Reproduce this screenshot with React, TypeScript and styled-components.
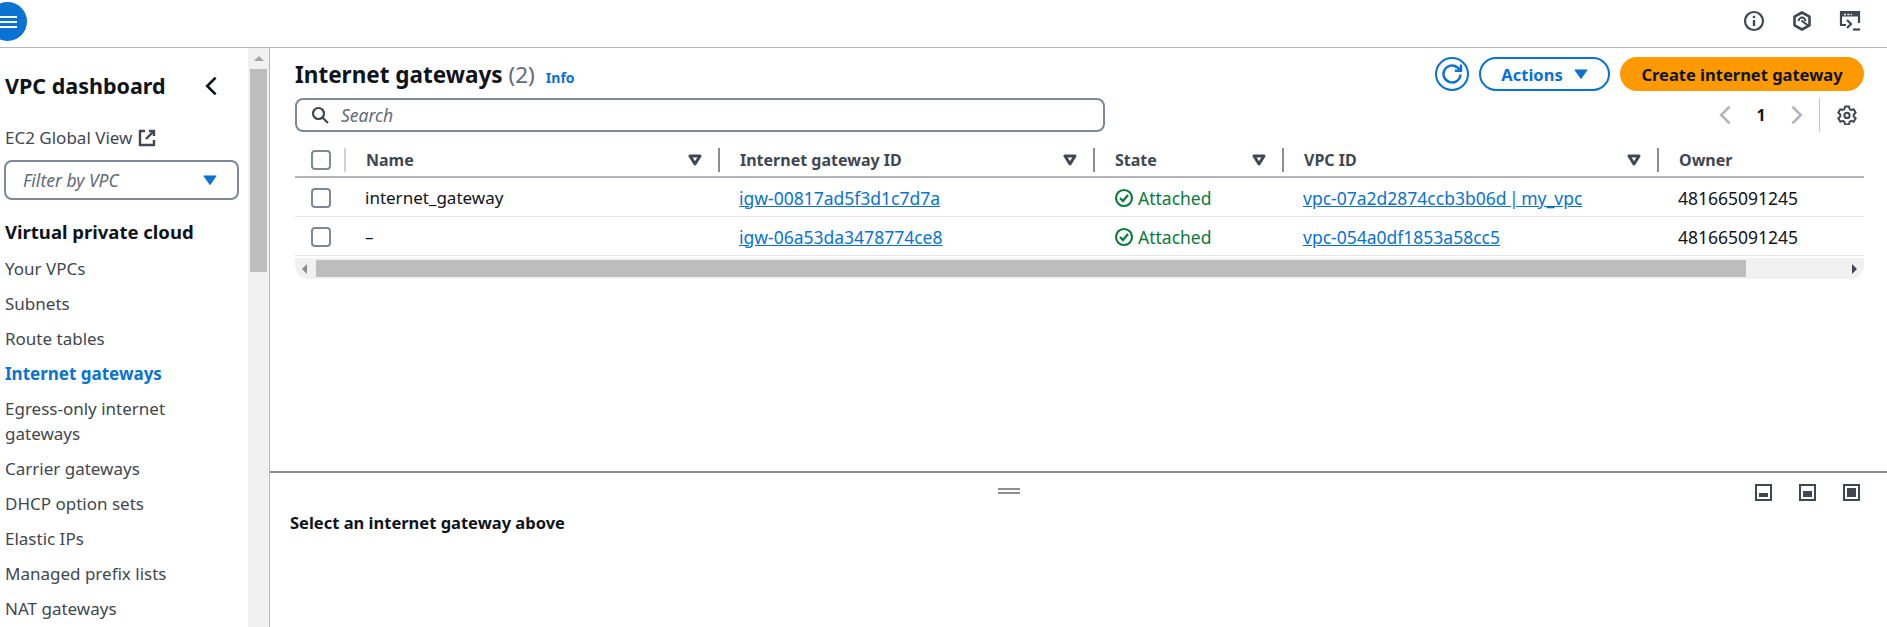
import React from "react";
import styled, { createGlobalStyle } from "styled-components";

const GlobalStyle = createGlobalStyle`
  html, body {
    margin: 0;
    height: 627px;
    overflow: hidden;
    background: #fff;
    font-family: "Noto Sans", "Open Sans", sans-serif;
    color: #16191f;
  }
  * { box-sizing: border-box; }
`;

const Page = styled.div`
  width: 1887px;
  height: 627px;
  display: flex;
  flex-direction: column;
  overflow: hidden;
`;

const TopBar = styled.header`
  height: 48px;
  flex: none;
  display: flex;
  align-items: flex-start;
  justify-content: space-between;
  border-bottom: 1px solid #b6b6bb;
`;

const MenuButton = styled.div`
  width: 39px;
  height: 39px;
  margin: 2px 0 0 -12px;
  border-radius: 50%;
  background: #0972d3;
  display: flex;
  align-items: center;
  justify-content: center;
`;

const TopIcons = styled.div`
  display: flex;
  gap: 26px;
  padding: 10px 26px 0 0;
  color: #414750;
`;

const Body = styled.div`
  flex: 1;
  display: flex;
  min-height: 0;
`;

const Sidebar = styled.aside`
  width: 270px;
  flex: none;
  display: flex;
  border-right: 1px solid #b6b6bb;
`;

const SideContent = styled.nav`
  width: 248px;
  flex: none;
  padding: 0 9px 0 4px;
`;

const SideHeader = styled.div`
  height: 75px;
  display: flex;
  align-items: center;
  justify-content: space-between;
  padding: 0 15px 0 1px;
  color: #0f141a;
`;

const SideTitle = styled.h2`
  margin: 0;
  font-size: 21.5px;
  font-weight: 700;
  line-height: 26px;
`;

const GlobalLink = styled.div`
  height: 25px;
  margin-top: 2px;
  padding-left: 1px;
  display: flex;
  align-items: center;
  gap: 6px;
  font-size: 17px;
  color: #414750;
`;

const FilterBox = styled.div`
  height: 40px;
  margin-top: 10px;
  padding: 0 20px 0 17px;
  display: flex;
  align-items: center;
  justify-content: space-between;
  border: 2px solid #7d8998;
  border-radius: 8px;
  font-size: 17.5px;
  font-style: italic;
  color: #5f6b7a;
`;

const SideGroup = styled.h3`
  margin: 20px 0 7px 1px;
  font-size: 18.5px;
  font-weight: 700;
  line-height: 24px;
  color: #0f141a;
`;

const NavItem = styled.div<{ $active?: boolean }>`
  padding: 5px 30px 5px 1px;
  font-size: 17px;
  line-height: 25px;
  font-weight: ${(p) => (p.$active ? 700 : 400)};
  color: ${(p) => (p.$active ? "#0972d3" : "#414750")};
`;

const VScroll = styled.div`
  flex: 1;
  background: #f1f1f1;
  display: flex;
  flex-direction: column;
  align-items: center;
`;

const ArrowUp = styled.div`
  width: 0;
  height: 0;
  margin-top: 8px;
  border-left: 5px solid transparent;
  border-right: 5px solid transparent;
  border-bottom: 5px solid #a3a3a3;
`;

const VThumb = styled.div`
  width: 17px;
  height: 203px;
  margin-top: 8px;
  background: #bdbdbd;
`;

const Main = styled.main`
  flex: 1;
  min-width: 0;
  display: flex;
  flex-direction: column;
`;

const ListPane = styled.section`
  height: 425px;
  flex: none;
  padding: 10px 23px 0 25px;
  border-bottom: 2px solid #8c8c94;
`;

const HeaderRow = styled.div`
  display: flex;
  align-items: center;
  justify-content: space-between;
  height: 34px;
`;

const TitleWrap = styled.div`
  display: flex;
  align-items: baseline;
  gap: 11px;
`;

const Title = styled.h1`
  margin: 0;
  font-size: 22.5px;
  font-weight: 700;
  line-height: 34px;
  color: #0f141a;
`;

const Count = styled.span`
  font-weight: 400;
  color: #5f6b7a;
`;

const InfoLink = styled.span`
  font-size: 14px;
  font-weight: 700;
  color: #0972d3;
`;

const Actions = styled.div`
  display: flex;
  align-items: center;
  gap: 10px;
  margin-top: -2px;
`;

const RefreshButton = styled.div`
  width: 34px;
  height: 34px;
  border: 2px solid #0972d3;
  border-radius: 50%;
  color: #0972d3;
  display: flex;
  align-items: center;
  justify-content: center;
`;

const OutlineButton = styled.div`
  width: 131px;
  height: 34px;
  border: 2px solid #0972d3;
  border-radius: 17px;
  display: flex;
  align-items: center;
  justify-content: center;
  gap: 11px;
  font-size: 16.5px;
  font-weight: 700;
  color: #0972d3;
`;

const PrimaryButton = styled.div`
  width: 244px;
  height: 34px;
  border-radius: 17px;
  background: #ff9900;
  display: flex;
  align-items: center;
  justify-content: center;
  font-size: 16.5px;
  font-weight: 700;
  color: #0f141a;
`;

const ToolRow = styled.div`
  height: 36px;
  margin-top: 5px;
  display: flex;
  align-items: center;
  justify-content: space-between;
`;

const SearchBox = styled.div`
  width: 810px;
  height: 34px;
  margin-top: -1px;
  padding: 0 0 0 14px;
  display: flex;
  align-items: center;
  gap: 12px;
  border: 2px solid #7d8998;
  border-radius: 8px;
  font-size: 17.5px;
  font-style: italic;
  color: #5f6b7a;
`;

const Pager = styled.div`
  display: flex;
  align-items: center;
  color: #b4b4bb;
`;

const PageNumber = styled.span`
  width: 46px;
  text-align: center;
  font-size: 16px;
  font-weight: 700;
  color: #0f141a;
`;

const PagerDivider = styled.div`
  width: 1px;
  height: 34px;
  margin: 0 17px 0 11px;
  background: #c6c6cd;
`;

const SettingsIcon = styled.div`
  display: flex;
  margin-right: 7px;
  color: #414750;
`;

const Row = styled.div<{ $head?: boolean }>`
  display: grid;
  grid-template-columns: 49px 374px 375px 189px 375px 207px;
  align-items: center;
  height: ${(p) => (p.$head ? "45px" : "39px")};
  padding-top: ${(p) => (p.$head ? "11px" : "1px")};
  border-bottom: ${(p) =>
    p.$head ? "2px solid #b4b4bb" : "1px solid #e8e8ea"};
`;

const Check = styled.div`
  width: 20px;
  height: 20px;
  margin-left: 16px;
  border: 2px solid #7d8998;
  border-radius: 4px;
`;

const HeadCell = styled.div<{ $first?: boolean }>`
  height: 24px;
  display: flex;
  align-items: center;
  justify-content: space-between;
  padding: 0 16px 0 20px;
  font-size: 16px;
  font-weight: 700;
  color: #414750;
  border-left: 2px solid ${(p) => (p.$first ? "#d1d1d5" : "#8c8c94")};
`;

const CheckHead = styled.div`
  display: flex;
  align-items: center;
`;

const Cell = styled.div`
  padding-left: 21px;
  font-size: 17px;
  color: #0f141a;
  white-space: nowrap;
`;

const CodeCell = styled(Cell)`
  font-size: 17.5px;
  word-spacing: -2px;
`;

const LinkText = styled.a`
  color: #0972d3;
  text-decoration: underline;
`;

const StatusCell = styled(Cell)`
  display: flex;
  align-items: center;
  gap: 4px;
  font-size: 17.5px;
  color: #0b7a3e;
`;

const HScroll = styled.div`
  height: 21px;
  margin-top: 2px;
  display: flex;
  align-items: center;
  background: #f1f1f1;
  border-radius: 0 0 14px 14px;
`;

const ArrowLeft = styled.div`
  width: 0;
  height: 0;
  margin: 0 9px 0 7px;
  border-top: 5px solid transparent;
  border-bottom: 5px solid transparent;
  border-right: 5px solid #8c8c8c;
`;

const HThumb = styled.div`
  width: 1430px;
  height: 17px;
  background: #bdbdbd;
`;

const ArrowRight = styled.div`
  width: 0;
  height: 0;
  margin-left: auto;
  margin-right: 7px;
  border-top: 5px solid transparent;
  border-bottom: 5px solid transparent;
  border-left: 5px solid #414750;
`;

const DetailPane = styled.section`
  position: relative;
  flex: 1;
  padding: 38px 0 0 20px;
`;

const DragHandle = styled.div`
  position: absolute;
  top: 15px;
  left: 728px;
  width: 22px;
  height: 6px;
  border-top: 2px solid #8c8c94;
  border-bottom: 2px solid #8c8c94;
`;

const PaneIcons = styled.div`
  position: absolute;
  top: 11px;
  right: 27px;
  display: flex;
  gap: 27px;
`;

const PaneIcon = styled.div<{ $fill: number }>`
  width: 17px;
  height: 17px;
  border: 2px solid #414750;
  padding: 2px;
  display: flex;
  align-items: flex-end;

  &::after {
    content: "";
    display: block;
    width: 100%;
    height: ${(p) => p.$fill}%;
    background: #414750;
  }
`;

const DetailText = styled.h4`
  margin: 0;
  font-size: 16.5px;
  font-weight: 700;
  line-height: 24px;
  color: #0f141a;
`;

const Caret = ({ color = "#0972d3", w = 14 }: { color?: string; w?: number }) => (
  <svg width={w} height={w * 0.75} viewBox="0 0 16 12">
    <path d="M1 1h14L8 11z" fill={color} stroke={color} strokeLinejoin="round" />
  </svg>
);

const SortIcon = () => (
  <svg width="14" height="12" viewBox="0 0 14 12">
    <path
      d="M2 2h10L7 10z"
      fill="none"
      stroke="#414750"
      strokeWidth="3"
      strokeLinejoin="round"
    />
  </svg>
);

const Chevron = ({ dir, size = 24 }: { dir: "left" | "right"; size?: number }) => (
  <svg width={size} height={size} viewBox="0 0 20 20">
    <path
      d={dir === "left" ? "M13 3l-7 7 7 7" : "M7 3l7 7-7 7"}
      fill="none"
      stroke="currentColor"
      strokeWidth="2.2"
    />
  </svg>
);

const InfoIcon = () => (
  <svg width="22" height="22" viewBox="0 0 22 22" fill="none" stroke="currentColor" strokeWidth="2.2">
    <circle cx="11" cy="11" r="9" />
    <path d="M11 10v6" strokeWidth="2.4" />
    <path d="M11 5.8v2.2" strokeWidth="2.4" />
  </svg>
);

const HexIcon = () => (
  <svg width="22" height="22" viewBox="0 0 22 22" fill="none" stroke="currentColor">
    <path d="M11 2.5l7.5 4.2v8.6L11 19.5l-7.5-4.2V6.7z" strokeWidth="2.6" strokeLinejoin="round" />
    <path d="M7.6 11a3.4 3.4 0 0 1 6.8 0" strokeWidth="2" />
    <path d="M10.5 10.5l6.5 5" strokeWidth="2.2" />
  </svg>
);

const TerminalIcon = () => (
  <svg width="22" height="22" viewBox="0 0 22 22" fill="none" stroke="currentColor">
    <path d="M7 15H2V2h18v11" strokeWidth="2.2" />
    <path d="M2 4.5h18" strokeWidth="4" />
    <path d="M5 4.5h8" stroke="#fff" strokeWidth="1.4" strokeDasharray="2 1.4" />
    <path d="M8 10l4 4-4 4" strokeWidth="2.2" />
    <path d="M14 19.5h7" strokeWidth="2.2" />
  </svg>
);

const ExternalIcon = () => (
  <svg width="18" height="18" viewBox="0 0 18 18" fill="none" stroke="#414750" strokeWidth="2.4">
    <path d="M7 2H2v14h14v-5" />
    <path d="M11 2h5v5" />
    <path d="M16 2L8 10" />
  </svg>
);

const SearchIcon = () => (
  <svg width="18" height="18" viewBox="0 0 18 18" fill="none" stroke="#414750" strokeWidth="2.2">
    <circle cx="7.5" cy="7.5" r="5.5" />
    <path d="M11.5 11.5L17 17" />
  </svg>
);

const RefreshIcon = () => (
  <svg width="24" height="24" viewBox="0 0 24 24" fill="none" stroke="currentColor" strokeWidth="2.4">
    <path d="M20.5 12.5a8.5 8.5 0 1 1-3-7L20.5 8" />
    <path d="M21 2.5V8.8H14.8" />
  </svg>
);

const GearIcon = () => (
  <svg width="20" height="20" viewBox="0 0 20 20" fill="none" stroke="currentColor" strokeWidth="2" strokeLinejoin="round">
    <path d="M8 1.5h4l.6 2.6 1.5.9 2.6-.8 2 3.5-2 1.8v1.9l2 1.8-2 3.5-2.6-.8-1.5.9-.6 2.6H8l-.6-2.6-1.5-.9-2.6.8-2-3.5 2-1.8V9.5l-2-1.8 2-3.5 2.6.8 1.5-.9z" />
    <circle cx="10" cy="10.4" r="2.6" />
  </svg>
);

const StatusIcon = () => (
  <svg width="20" height="20" viewBox="0 0 20 20" fill="none" stroke="#0b7a3e" strokeWidth="2.2">
    <circle cx="10" cy="10" r="8" />
    <path d="M6 10l3 3 5-6" />
  </svg>
);

const navItems = [
  "Your VPCs",
  "Subnets",
  "Route tables",
  "Internet gateways",
  "Egress-only internet gateways",
  "Carrier gateways",
  "DHCP option sets",
  "Elastic IPs",
  "Managed prefix lists",
  "NAT gateways",
];

const columns = ["Name", "Internet gateway ID", "State", "VPC ID"];

const gateways = [
  {
    name: "internet_gateway",
    id: "igw-00817ad5f3d1c7d7a",
    vpc: "vpc-07a2d2874ccb3b06d | my_vpc",
    owner: "481665091245",
  },
  {
    name: "–",
    id: "igw-06a53da3478774ce8",
    vpc: "vpc-054a0df1853a58cc5",
    owner: "481665091245",
  },
];

export default function App() {
  return (
    <Page>
      <GlobalStyle />
      <TopBar>
        <MenuButton>
          <svg width="22" height="18" viewBox="0 0 22 18">
            <path d="M2 4h18M2 9h18M2 14h18" stroke="#fff" strokeWidth="2.2" />
          </svg>
        </MenuButton>
        <TopIcons>
          <InfoIcon />
          <HexIcon />
          <TerminalIcon />
        </TopIcons>
      </TopBar>
      <Body>
        <Sidebar>
          <SideContent>
            <SideHeader>
              <SideTitle>VPC dashboard</SideTitle>
              <Chevron dir="left" />
            </SideHeader>
            <GlobalLink>
              EC2 Global View
              <ExternalIcon />
            </GlobalLink>
            <FilterBox>
              Filter by VPC
              <Caret />
            </FilterBox>
            <SideGroup>Virtual private cloud</SideGroup>
            {navItems.map((item) => (
              <NavItem key={item} $active={item === "Internet gateways"}>
                {item}
              </NavItem>
            ))}
          </SideContent>
          <VScroll>
            <ArrowUp />
            <VThumb />
          </VScroll>
        </Sidebar>
        <Main>
          <ListPane>
            <HeaderRow>
              <TitleWrap>
                <Title>
                  Internet gateways <Count>(2)</Count>
                </Title>
                <InfoLink>Info</InfoLink>
              </TitleWrap>
              <Actions>
                <RefreshButton>
                  <RefreshIcon />
                </RefreshButton>
                <OutlineButton>
                  Actions
                  <Caret />
                </OutlineButton>
                <PrimaryButton>Create internet gateway</PrimaryButton>
              </Actions>
            </HeaderRow>
            <ToolRow>
              <SearchBox>
                <SearchIcon />
                Search
              </SearchBox>
              <Pager>
                <Chevron dir="left" />
                <PageNumber>1</PageNumber>
                <Chevron dir="right" />
                <PagerDivider />
                <SettingsIcon>
                  <GearIcon />
                </SettingsIcon>
              </Pager>
            </ToolRow>
            <Row $head>
              <CheckHead>
                <Check />
              </CheckHead>
              {columns.map((col, i) => (
                <HeadCell key={col} $first={i === 0}>
                  {col}
                  <SortIcon />
                </HeadCell>
              ))}
              <HeadCell>Owner</HeadCell>
            </Row>
            {gateways.map((gw) => (
              <Row key={gw.id}>
                <Check />
                <Cell>{gw.name}</Cell>
                <CodeCell>
                  <LinkText>{gw.id}</LinkText>
                </CodeCell>
                <StatusCell>
                  <StatusIcon />
                  Attached
                </StatusCell>
                <CodeCell>
                  <LinkText>{gw.vpc}</LinkText>
                </CodeCell>
                <CodeCell>{gw.owner}</CodeCell>
              </Row>
            ))}
            <HScroll>
              <ArrowLeft />
              <HThumb />
              <ArrowRight />
            </HScroll>
          </ListPane>
          <DetailPane>
            <DragHandle />
            <PaneIcons>
              <PaneIcon $fill={40} />
              <PaneIcon $fill={70} />
              <PaneIcon $fill={100} />
            </PaneIcons>
            <DetailText>Select an internet gateway above</DetailText>
          </DetailPane>
        </Main>
      </Body>
    </Page>
  );
}
